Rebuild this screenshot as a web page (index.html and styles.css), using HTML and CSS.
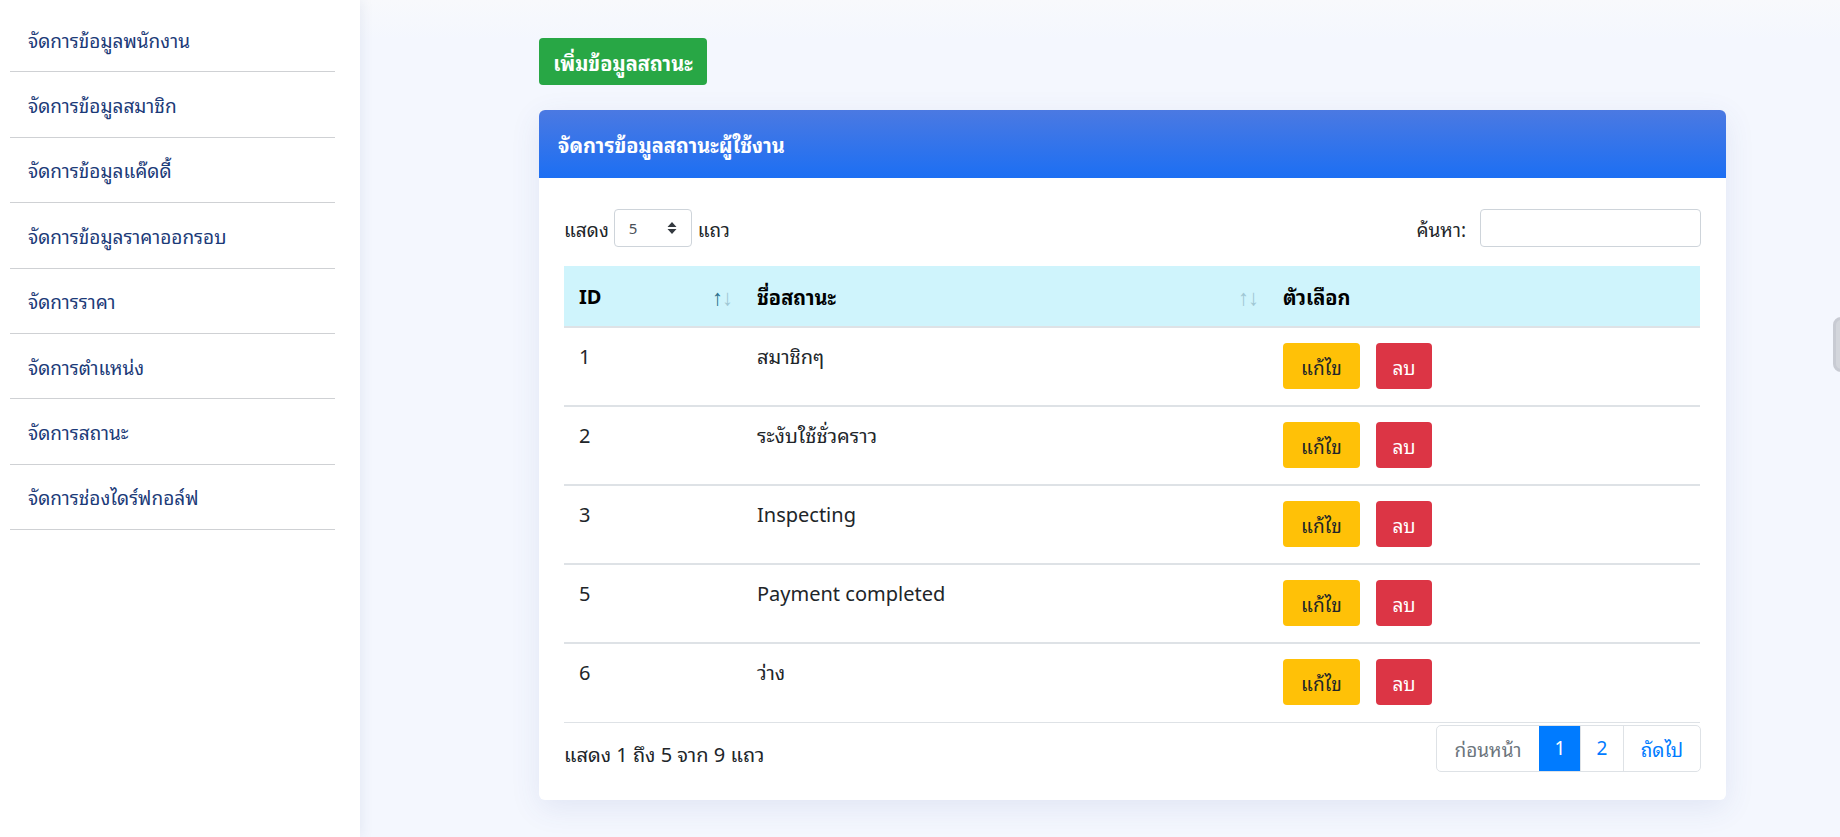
FILE: index.html
```html
<!DOCTYPE html>
<html lang="th">
<head>
<meta charset="utf-8">
<title>จัดการสถานะ</title>
<link rel="stylesheet" href="styles.css">
</head>
<body>
<div class="layout">
  <aside class="sidebar">
    <ul class="menu">
      <li><a href="#">จัดการข้อมูลพนักงาน</a></li>
      <li><a href="#">จัดการข้อมูลสมาชิก</a></li>
      <li><a href="#">จัดการข้อมูลแค๊ดดี้</a></li>
      <li><a href="#">จัดการข้อมูลราคาออกรอบ</a></li>
      <li><a href="#">จัดการราคา</a></li>
      <li><a href="#">จัดการตำแหน่ง</a></li>
      <li><a href="#">จัดการสถานะ</a></li>
      <li><a href="#">จัดการช่องไดร์ฟกอล์ฟ</a></li>
    </ul>
  </aside>
  <main class="main">
    <div class="container">
      <button class="btn btn-add">เพิ่มข้อมูลสถานะ</button>
      <section class="card">
        <header class="card-header">จัดการข้อมูลสถานะผู้ใช้งาน</header>
        <div class="card-body">
          <div class="controls">
            <label class="length">แสดง
              <span class="select">5
                <svg class="caret" width="10" height="14" viewBox="0 0 10 14"><path d="M5 1 L9.5 6 H0.5 Z M5 13 L9.5 8 H0.5 Z" fill="#343a40"/></svg>
              </span>
              แถว</label>
            <label class="search">ค้นหา: <span class="input"></span></label>
          </div>
          <table class="table">
            <thead>
              <tr>
                <th class="c1">ID<span class="sort"><span class="up on">↑</span><span class="down">↓</span></span></th>
                <th class="c2">ชื่อสถานะ<span class="sort"><span class="up">↑</span><span class="down">↓</span></span></th>
                <th class="c3">ตัวเลือก</th>
              </tr>
            </thead>
            <tbody>
              <tr><td>1</td><td>สมาชิกๆ</td><td><div class="acts"><button class="btn btn-edit">แก้ไข</button><button class="btn btn-del">ลบ</button></div></td></tr>
              <tr><td>2</td><td>ระงับใช้ชั่วคราว</td><td><div class="acts"><button class="btn btn-edit">แก้ไข</button><button class="btn btn-del">ลบ</button></div></td></tr>
              <tr><td>3</td><td>Inspecting</td><td><div class="acts"><button class="btn btn-edit">แก้ไข</button><button class="btn btn-del">ลบ</button></div></td></tr>
              <tr><td>5</td><td>Payment completed</td><td><div class="acts"><button class="btn btn-edit">แก้ไข</button><button class="btn btn-del">ลบ</button></div></td></tr>
              <tr><td>6</td><td>ว่าง</td><td><div class="acts"><button class="btn btn-edit">แก้ไข</button><button class="btn btn-del">ลบ</button></div></td></tr>
            </tbody>
          </table>
          <div class="footer">
            <div class="info">แสดง 1 ถึง 5 จาก 9 แถว</div>
            <ul class="pagination">
              <li class="prev disabled">ก่อนหน้า</li>
              <li class="active">1</li>
              <li class="p2">2</li>
              <li class="next">ถัดไป</li>
            </ul>
          </div>
        </div>
      </section>
    </div>
  </main>
</div>
<div class="edge-tab"></div>
</body>
</html>
```

FILE: styles.css
```css
* { box-sizing: border-box; }
html, body { margin: 0; padding: 0; }
body {
  font-family: "Noto Sans", "Noto Sans Thai Looped", "Leelawadee UI", "Tahoma", "Waree", "Loma", "Garuda", "Noto Sans Thai", "Liberation Sans", sans-serif;
  color: #212529;
  background: #f4f7fe;
  width: 1840px;
  height: 837px;
  overflow: hidden;
}
.layout { display: flex; height: 837px; }
.sidebar {
  width: 360px;
  flex: none;
  background: #fff;
  box-shadow: 2px 0 12px rgba(40, 60, 120, 0.08);
  padding: 7px 25px 0 10px;
  position: relative;
  z-index: 1;
}
.menu { list-style: none; margin: 0; padding: 0; }
.menu li { border-bottom: 1px solid #cfd1d4; }
.menu a {
  display: flex;
  align-items: center;
  height: 64.4px;
  padding-left: 18px;
  color: #1b3a78;
  text-decoration: none;
  font-size: 19px;
}
.main {
  flex: 1;
  background: linear-gradient(#f8f9fc 0, #f4f7fe 40px);
}
.container {
  width: 1187px;
  margin-left: 179px;
  padding-top: 38px;
}
.btn {
  border: none;
  border-radius: 4px;
  font-family: inherit;
  cursor: pointer;
}
.btn-add {
  background: #28a745;
  color: #fff;
  font-size: 20px;
  font-weight: 700;
  height: 47px;
  width: 168px;
  padding: 0;
}
.card {
  margin-top: 25px;
  background: #fff;
  border-radius: 6px;
  box-shadow: 0 8px 30px rgba(60, 80, 160, 0.10);
  overflow: hidden;
}
.card-header {
  height: 68px;
  display: flex;
  align-items: center;
  padding-left: 19px;
  background: linear-gradient(#4b79e2, #1c6ff3);
  color: #fff;
  font-weight: 700;
  font-size: 20px;
}
.card-body { padding: 31px 25px 28px; }
.controls {
  display: flex;
  justify-content: space-between;
  align-items: center;
  height: 38px;
  font-size: 19px;
}
.length, .search { display: flex; align-items: center; }
.select {
  display: inline-flex;
  align-items: center;
  justify-content: space-between;
  width: 78px;
  height: 38px;
  margin: 0 6px 0 5px;
  padding: 0 14px 0 14px;
  border: 1px solid #ced4da;
  border-radius: 4px;
  font-size: 15px;
  color: #495057;
}
.input {
  display: inline-block;
  width: 221px;
  height: 38px;
  margin-left: 14px;
  border: 1px solid #ced4da;
  border-radius: 4px;
}
.table {
  width: 1136px;
  margin-top: 19px;
  border-collapse: collapse;
  font-size: 20px;
  table-layout: fixed;
}
.table th {
  background: #cff4fc;
  text-align: left;
  font-weight: 700;
  height: 61px;
  padding: 0 15px;
  border-bottom: 2px solid #dee2e6;
  position: relative;
  color: #000;
}
.c1 { width: 178px; }
.c2 { width: 526px; }
.sort {
  position: absolute;
  right: 10px;
  top: 50%;
  transform: translateY(-50%);
  font-weight: 400;
  font-size: 22px;
  color: #9fc7d4;
  letter-spacing: -1px;
}
.sort .on { color: #2b6f8c; }
.table td {
  vertical-align: top;
  padding: 15px 15px 15px;
  border-bottom: 2px solid #dee2e6;
  line-height: 28px;
  height: 79px;
}
.table tbody tr:last-child td { border-bottom: 1px solid #dee2e6; }
.acts { display: flex; gap: 16px; }
.btn-edit, .btn-del {
  height: 46px;
  font-size: 19px;
  padding: 0;
}
.btn-edit { background: #ffc107; color: #212529; width: 77px; }
.btn-del { background: #dc3545; color: #fff; width: 56px; }
.footer {
  display: flex;
  justify-content: space-between;
  align-items: flex-start;
  margin-top: 2px;
}
.info { font-size: 20px; padding-top: 12px; }
.pagination {
  list-style: none;
  margin: 0;
  padding: 0;
  display: flex;
  border: 1px solid #dee2e6;
  border-radius: 5px;
  overflow: hidden;
  height: 47px;
}
.pagination li {
  display: flex;
  align-items: center;
  justify-content: center;
  color: #007bff;
  font-size: 19px;
  border-left: 1px solid #dee2e6;
  padding: 0;
}
.pagination li.prev { border-left: none; width: 102px; }
.pagination li.disabled { color: #6c757d; }
.pagination li.active { background: #007bff; color: #fff; border-color: #007bff; width: 41px; }
.pagination li.p2 { width: 43px; }
.pagination li.next { width: 77px; }
.edge-tab {
  position: absolute;
  left: 1833px;
  top: 317px;
  width: 20px;
  height: 55px;
  border: 3px solid #c8cbd3;
  border-radius: 8px;
  background: #d3d6dc;
}
```
